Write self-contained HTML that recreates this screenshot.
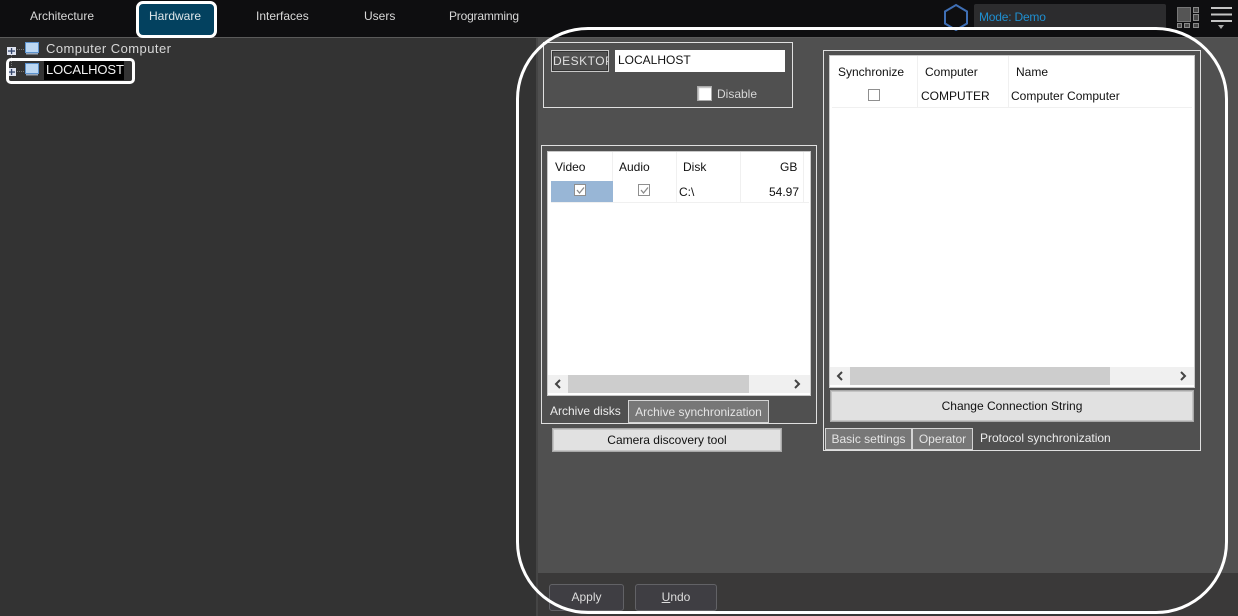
<!DOCTYPE html>
<html><head><meta charset="utf-8"><style>
*{box-sizing:border-box}
html,body{margin:0;padding:0}
body{width:1238px;height:616px;position:relative;overflow:hidden;background:#333;font-family:"Liberation Sans",sans-serif;font-size:12px;color:#111}
.a{position:absolute}
.t{position:absolute;white-space:nowrap;line-height:14px}
.n{color:#d8d8d8;top:9px;font-size:12px}
.box{position:absolute;border:1px solid #e0e0e0}
.hd{position:absolute;width:1px;background:#f0f0f0}
.tab{position:absolute;background:#777;border:1px solid #d4d4d4;color:#e4e4e4;text-align:center;line-height:17px;white-space:nowrap}
.btn{position:absolute;background:#e1e1e1;border:1px solid #a8a8a8;box-shadow:inset 0 0 0 1px #c4c4c4;text-align:center;color:#111;white-space:nowrap}
.cb{position:absolute;width:12px;height:12px;background:#fff;border:1px solid #8f8f8f}
.sb{position:absolute;background:#f0f0f0;height:18px}
.dk{position:absolute;background:#3f3e43;border:1px solid #626266;border-radius:3px;color:#ddd;text-align:center;line-height:25px}
</style></head><body>
<div class="a" style="left:0;top:0;width:1238px;height:37px;background:#0e0e10"></div>
<div class="a" style="left:0;top:37px;width:1238px;height:1px;background:#5a5a5a"></div>
<div class="t n" style="left:30px">Architecture</div>
<div class="a" style="left:136px;top:1px;width:81px;height:37px;background:#03415f;border:3px solid #fff;border-radius:7px"></div>
<div class="t n" style="left:149px;color:#dfe6ea">Hardware</div>
<div class="t n" style="left:256px">Interfaces</div>
<div class="t n" style="left:364px">Users</div>
<div class="t n" style="left:449px;letter-spacing:-.2px">Programming</div>

<svg class="a" style="left:943px;top:3px" width="26" height="28"><path d="M13 2 L24 8.500 V20.500 L13 27 L2 20.500 V8.500 Z" fill="none" stroke="#3f6fb5" stroke-width="2"/></svg>
<div class="a" style="left:974px;top:4px;width:192px;height:25px;background:#2c2c2e;border-radius:2px"></div>
<div class="t" style="left:979px;top:10px;color:#1f8fd0;letter-spacing:-.2px">Mode: Demo</div>
<svg class="a" style="left:1176px;top:6px" width="25" height="24"><rect x="1.500" y="1.500" width="13" height="14" fill="#555" stroke="#777"/><g fill="#484848" stroke="#8a8a8a"><rect x="17.500" y="1.500" width="5" height="5"/><rect x="17.500" y="8.500" width="5" height="6"/><rect x="1.500" y="17.500" width="4" height="4"/><rect x="8.500" y="17.500" width="5" height="4"/><rect x="17.500" y="17.500" width="5" height="4"/></g></svg>
<svg class="a" style="left:1211px;top:7px" width="22" height="24"><g fill="#c4c4c4"><rect width="21" height="2" y="0"/><rect width="21" height="2" y="6.500"/><rect width="21" height="2" y="13"/></g><path d="M7 18 h6 l-3 4 z" fill="#aaa"/></svg>

<!-- tree -->
<div class="a" style="left:0;top:38px;width:536px;height:578px;background:#333"></div>
<div class="a" style="left:536px;top:38px;width:2px;height:578px;background:#454545"></div>
<svg class="a" style="left:5px;top:40px" width="40" height="42">
<g stroke="#777" stroke-dasharray="1 1" fill="none"><path d="M12 9.500 H20 M6.500 15 V27 M12 31.500 H20"/></g>
<g fill="#dfe4f0"><rect x="2" y="7" width="9" height="8"/><rect x="2" y="28" width="9" height="8"/></g>
<g fill="#35466b"><rect x="3" y="10.400" width="7" height="1.300"/><rect x="5.900" y="8" width="1.300" height="6"/><rect x="3" y="31.400" width="7" height="1.300"/><rect x="5.900" y="29" width="1.300" height="6"/></g>
<g><rect x="20.500" y="2.500" width="13" height="10" fill="#bcd8f4" stroke="#5c93cf"/><rect x="21" y="13" width="12" height="1.500" fill="#9aa7b8"/><rect x="20.500" y="23.500" width="13" height="10" fill="#bcd8f4" stroke="#5c93cf"/><rect x="21" y="34" width="12" height="1.500" fill="#9aa7b8"/></g></svg>
<div class="t" style="left:46px;top:42px;color:#d8d8d8;font-size:13px;letter-spacing:.45px">Computer Computer</div>
<div class="a" style="left:44px;top:61px;width:80px;height:19px;background:#000"></div>
<div class="t" style="left:46px;top:63px;color:#f2f2f2;font-size:13px;letter-spacing:-.1px">LOCALHOST</div>
<div class="a" style="left:6px;top:58px;width:129px;height:26px;border:3px solid #fff;border-radius:5px"></div>

<!-- right panel -->
<div class="a" style="left:538px;top:38px;width:700px;height:535px;background:#505050"></div>
<div class="a" style="left:538px;top:573px;width:700px;height:43px;background:#3a3939"></div>

<div class="box" style="left:543px;top:42px;width:250px;height:66px"></div>
<div class="a" style="left:551px;top:50px;width:58px;height:22px;border:1px solid #c8c8c8;overflow:hidden;color:#e0e0e0;line-height:20px;padding-left:1px;letter-spacing:.5px;box-shadow:inset 0 0 0 1px #333">DESKTOP</div>
<div class="a" style="left:615px;top:50px;width:170px;height:22px;background:#fff;color:#111;line-height:21px;padding-left:3px">LOCALHOST</div>
<div class="a" style="left:697px;top:86px;width:15px;height:15px;background:#fff;border:1px solid #aaa;box-shadow:inset 1px 1px 1px #bbb"></div>
<div class="t" style="left:717px;top:87px;color:#d6d6d6">Disable</div>

<!-- left table -->
<div class="box" style="left:541px;top:145px;width:276px;height:279px"></div>
<div class="a" style="left:547px;top:151px;width:264px;height:245px;background:#fff;border:1px solid #c8c8c8"></div>
<div class="hd" style="left:612px;top:152px;height:50px"></div>
<div class="hd" style="left:676px;top:152px;height:50px"></div>
<div class="hd" style="left:740px;top:152px;height:50px"></div>
<div class="hd" style="left:803px;top:152px;height:50px"></div>
<div class="a" style="left:551px;top:202px;width:258px;height:1px;background:#f0f0f0"></div>
<div class="a" style="left:551px;top:181px;width:62px;height:21px;background:#98b6d6"></div>
<div class="t" style="left:555px;top:160px">Video</div>
<div class="t" style="left:619px;top:160px">Audio</div>
<div class="t" style="left:683px;top:160px">Disk</div>
<div class="t" style="left:780px;top:160px">GB</div>
<div class="cb" style="left:574px;top:184px"></div>
<div class="cb" style="left:638px;top:184px"></div>
<svg class="a" style="left:574px;top:184px" width="78" height="13"><path d="M3 6 L5.500 9 L10 3.500" fill="none" stroke="#8a8a8a" stroke-width="1.300"/><path d="M67 6 L69.500 9 L74 3.500" fill="none" stroke="#8a8a8a" stroke-width="1.300"/></svg>
<div class="t" style="left:679px;top:185px">C:\</div>
<div class="t" style="left:769px;top:185px">54.97</div>
<div class="sb" style="left:548px;top:375px;width:262px"></div>
<div class="a" style="left:568px;top:375px;width:181px;height:18px;background:#cdcdcd"></div>
<svg class="a" style="left:552px;top:378px" width="252" height="12"><path d="M8 2 L4 6 L8 10 M243 2 L247 6 L243 10" fill="none" stroke="#444" stroke-width="2"/></svg>
<div class="t" style="left:550px;top:404px;color:#ececec">Archive disks</div>
<div class="tab" style="left:628px;top:400px;width:141px;height:23px;line-height:22px">Archive synchronization</div>
<div class="btn" style="left:552px;top:428px;width:230px;height:24px;line-height:22px">Camera discovery tool</div>

<!-- right table -->
<div class="box" style="left:823px;top:50px;width:378px;height:401px"></div>
<div class="a" style="left:829px;top:55px;width:366px;height:333px;background:#fff;border:1px solid #c8c8c8"></div>
<div class="hd" style="left:917px;top:56px;height:51px"></div>
<div class="hd" style="left:1008px;top:56px;height:51px"></div>
<div class="a" style="left:832px;top:107px;width:360px;height:1px;background:#f0f0f0"></div>
<div class="t" style="left:838px;top:65px">Synchronize</div>
<div class="t" style="left:925px;top:65px">Computer</div>
<div class="t" style="left:1016px;top:65px">Name</div>
<div class="cb" style="left:868px;top:89px"></div>
<div class="t" style="left:921px;top:89px">COMPUTER</div>
<div class="t" style="left:1011px;top:89px">Computer Computer</div>
<div class="sb" style="left:830px;top:367px;width:364px"></div>
<div class="a" style="left:850px;top:367px;width:260px;height:18px;background:#cdcdcd"></div>
<svg class="a" style="left:834px;top:370px" width="356" height="12"><path d="M8 2 L4 6 L8 10 M347 2 L351 6 L347 10" fill="none" stroke="#444" stroke-width="2"/></svg>
<div class="btn" style="left:830px;top:390px;width:364px;height:32px;line-height:31px">Change Connection String</div>
<div class="tab" style="left:825px;top:428px;width:87px;height:22px;line-height:21px">Basic settings</div>
<div class="tab" style="left:912px;top:428px;width:61px;height:22px;line-height:21px">Operator</div>
<div class="t" style="left:980px;top:431px;color:#ececec">Protocol synchronization</div>

<div class="dk" style="left:549px;top:584px;width:75px;height:27px">Apply</div>
<div class="dk" style="left:635px;top:584px;width:82px;height:27px"><u>U</u>ndo</div>

<div class="a" style="left:516px;top:27px;width:712px;height:587px;border:3px solid #fff;border-radius:72px"></div>
</body></html>
